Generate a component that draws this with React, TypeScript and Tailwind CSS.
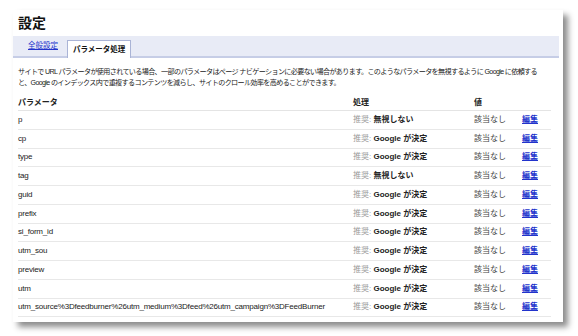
const rows: { name: string; action: 'ignore' | 'google' }[] = [
  { name: 'p', action: 'ignore' },
  { name: 'cp', action: 'google' },
  { name: 'type', action: 'google' },
  { name: 'tag', action: 'ignore' },
  { name: 'guid', action: 'google' },
  { name: 'prefix', action: 'google' },
  { name: 'si_form_id', action: 'google' },
  { name: 'utm_sou', action: 'google' },
  { name: 'preview', action: 'google' },
  { name: 'utm', action: 'google' },
  { name: 'utm_source%3Dfeedburner%26utm_medium%3Dfeed%26utm_campaign%3DFeedBurner', action: 'google' }
];

const font = "font-['Liberation_Sans','Noto_Sans_CJK_JP',sans-serif]";

export default function App() {
  return (
    <div className={`w-[578px] h-[336px] bg-white overflow-hidden ${font}`}>
      <div className="ml-[13px] mt-[10px] w-[550px] h-[312px] bg-white shadow-[5px_5px_6px_rgba(0,0,0,0.45)] flex flex-col">
        <h1 className="pl-[5px] pt-[5px] text-[14px] leading-[16px] font-bold text-[#111]">設定</h1>

        <div className="mt-[5px] mr-[4px] h-[22px] bg-[#e8ebf6] border-b-2 border-[#c6cde6] flex items-end pl-[15px]">
          <a className="text-[7.5px] leading-[10px] text-[#2233cc] underline mb-[5px] mr-[9px]">全般設定</a>
          <div className="h-[18px] -mb-[2px] px-[5px] bg-white border border-b-0 border-[#aab4d6] flex items-center text-[7.5px] font-bold text-[#111]">
            パラメータ処理
          </div>
        </div>

        <p className="mt-[9px] px-[5px] text-[7.1px] leading-[11px] text-[#222] tracking-[-0.65px] whitespace-nowrap">
          サイトで URL パラメータが使用されている場合、一部のパラメータはページ ナビゲーションに必要ない場合があります。このようなパラメータを無視するように Google に依頼する
          <br />
          と、Google のインデックス内で重複するコンテンツを減らし、サイトのクロール効率を高めることができます。
        </p>

        <div className="mt-[6px] ml-[5px] w-[533px] text-[8px] text-[#222]">
          <div className="flex items-center h-[16px] border-b border-[#e4e4e4] font-bold">
            <div className="w-[335px]">パラメータ</div>
            <div className="w-[121px]">処理</div>
            <div>値</div>
          </div>
          {rows.map((r) => (
            <div key={r.name} className="flex items-center h-[18.75px] border-b border-[#e8e8e8]">
              <div className="w-[335px] text-[8px] tracking-[-0.2px]">{r.name}</div>
              <div className="w-[121px]">
                <span className="text-[#999]">推奨: </span>
                {r.action === 'ignore' ? (
                  <span className="font-bold">無視しない</span>
                ) : (
                  <span className="font-bold">Google が決定</span>
                )}
              </div>
              <div className="w-[48px] text-[#444]">該当なし</div>
              <a className="text-[#2233cc] underline font-bold">編集</a>
            </div>
          ))}
        </div>
      </div>
    </div>
  );
}
